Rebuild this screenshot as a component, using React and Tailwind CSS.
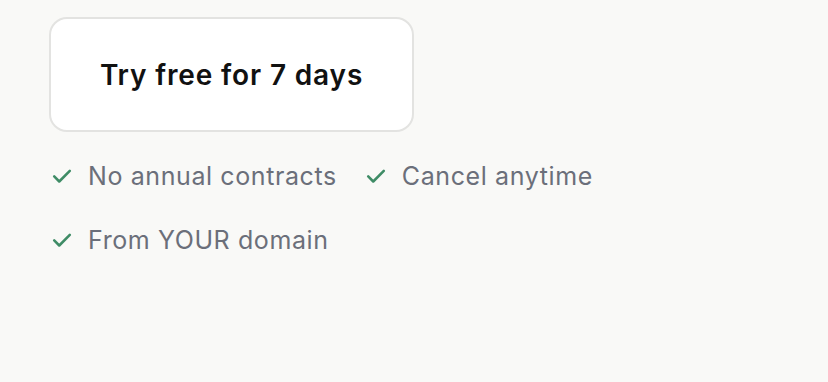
import React from "react";

function Check() {
  return (
    <svg width="22" height="22" viewBox="0 0 24 24" fill="none" stroke="#3f8c66" strokeWidth="2.8" strokeLinecap="round" strokeLinejoin="round" className="shrink-0">
      <path d="M3.5 12.5l5.5 5.5L20.5 6.5" />
    </svg>
  );
}

function Item({ children }) {
  return (
    <div className="flex items-center gap-[15px]">
      <Check />
      <span className="text-[25px] leading-[32px] tracking-[0.6px] text-[#6b6f7a]">{children}</span>
    </div>
  );
}

export default function App() {
  return (
    <div className="min-h-[382px] w-full bg-[#f9f9f7] pl-[49px] pt-[17px]" style={{ fontFamily: "Inter, 'Noto Sans', sans-serif" }}>
      <button className="flex h-[115px] w-[365px] items-center justify-center rounded-[18px] border-2 border-[#e3e3e1] bg-white text-[28px] font-semibold tracking-[0.85px] text-[#111111]">
        Try free for 7 days
      </button>
      <div className="mt-[28px] flex w-[600px] flex-wrap gap-x-[28px] gap-y-[32px] pl-[2px]">
        <Item>No annual contracts</Item>
        <Item>Cancel anytime</Item>
        <Item>From YOUR domain</Item>
      </div>
    </div>
  );
}
